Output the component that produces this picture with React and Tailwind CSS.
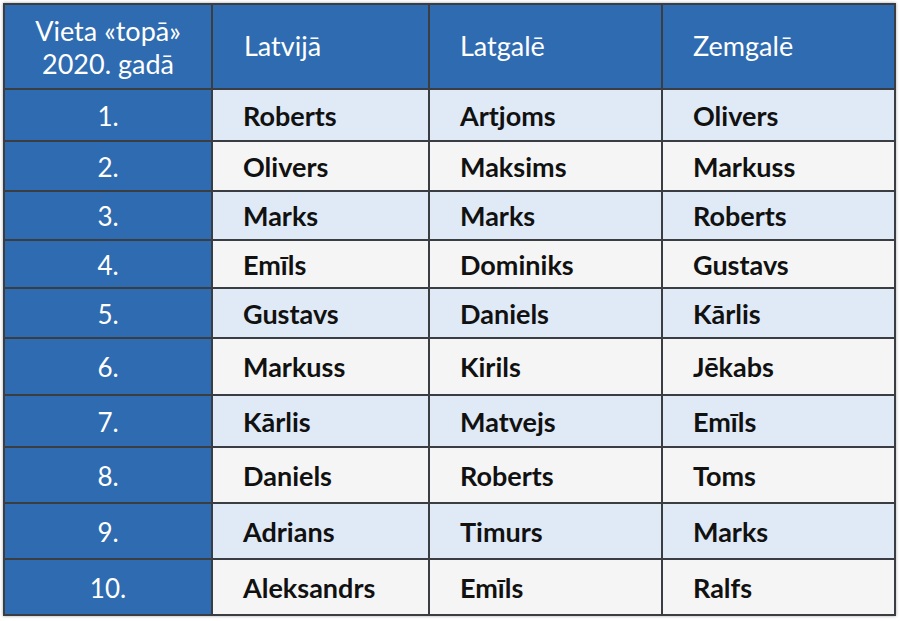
export default function App() {
  const rows = [
    ["1.", "Roberts", "Artjoms", "Olivers"],
    ["2.", "Olivers", "Maksims", "Markuss"],
    ["3.", "Marks", "Marks", "Roberts"],
    ["4.", "Emīls", "Dominiks", "Gustavs"],
    ["5.", "Gustavs", "Daniels", "Kārlis"],
    ["6.", "Markuss", "Kirils", "Jēkabs"],
    ["7.", "Kārlis", "Matvejs", "Emīls"],
    ["8.", "Daniels", "Roberts", "Toms"],
    ["9.", "Adrians", "Timurs", "Marks"],
    ["10.", "Aleksandrs", "Emīls", "Ralfs"],
  ];
  const heights = ["h-[50px]", "h-[48px]", "h-[47px]", "h-[46px]", "h-[48px]", "h-[55px]", "h-[50px]", "h-[54px]", "h-[54px]", "h-[54px]"];
  return (
    <div className="w-[900px] h-[621px] bg-white pt-[3px] pl-[3px]" style={{ fontFamily: "Lato, 'Noto Sans', sans-serif" }}>
      <div className="w-[893px] bg-[#3a3d42] p-[2px] flex flex-col gap-[2px] shadow-[0_0_3px_rgba(0,0,0,0.35)]">
        <div className="flex gap-[2px] h-[83px]">
          <div className="w-[206px] bg-[#2f6bb0] text-white text-[27px] leading-[33px] flex flex-col items-center justify-center">
            <span>Vieta «topā»</span>
            <span>2020. gadā</span>
          </div>
          <div className="w-[215px] bg-[#2f6bb0] text-white text-[27px] flex items-center pl-[31px]">Latvijā</div>
          <div className="w-[231px] bg-[#2f6bb0] text-white text-[27px] flex items-center pl-[30px]">Latgalē</div>
          <div className="w-[231px] bg-[#2f6bb0] text-white text-[27px] flex items-center pl-[30px]">Zemgalē</div>
        </div>
        {rows.map((r, i) => {
          const bg = i % 2 === 0 ? "bg-[#e0eaf6]" : "bg-[#f5f5f5]";
          return (
            <div key={i} className={`flex gap-[2px] ${heights[i]}`}>
              <div className="w-[206px] bg-[#2f6bb0] text-white text-[26px] flex items-center justify-center pt-[2px]">{r[0]}</div>
              <div className={`w-[215px] ${bg} text-[#111] text-[27px] font-bold flex items-center pl-[30px] pt-[2px]`}>{r[1]}</div>
              <div className={`w-[231px] ${bg} text-[#111] text-[27px] font-bold flex items-center pl-[30px] pt-[2px]`}>{r[2]}</div>
              <div className={`w-[231px] ${bg} text-[#111] text-[27px] font-bold flex items-center pl-[30px] pt-[2px]`}>{r[3]}</div>
            </div>
          );
        })}
      </div>
    </div>
  );
}
